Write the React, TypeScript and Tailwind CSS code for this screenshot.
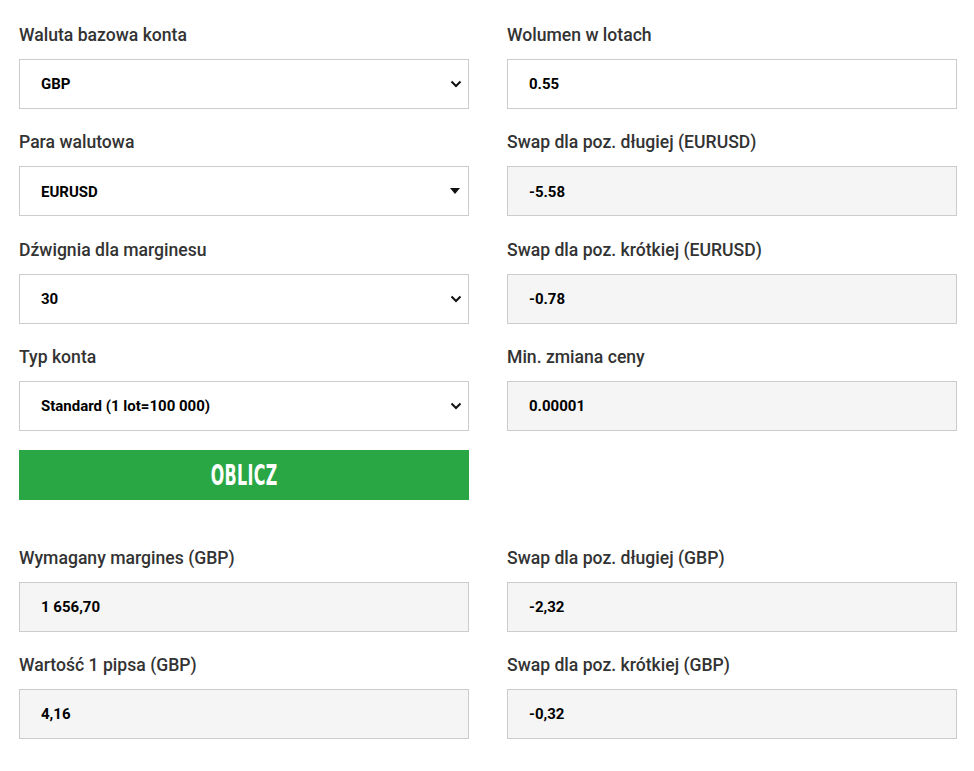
import React from 'react'

type FieldProps = {
  label: string
  value: string
  kind?: 'select' | 'dropdown' | 'input' | 'readonly'
}

const Chevron = () => (
  <svg width="12" height="8" viewBox="0 0 12 8" className="shrink-0">
    <polyline points="1.5,1.5 6,6 10.5,1.5" fill="none" stroke="#111" strokeWidth="2" />
  </svg>
)

const Caret = () => (
  <svg width="10" height="6" viewBox="0 0 10 6" className="shrink-0">
    <polygon points="0,0 10,0 5,6" fill="#111" />
  </svg>
)

const Field = ({ label, value, kind = 'input' }: FieldProps) => {
  const readonly = kind === 'readonly'
  return (
    <div className="flex flex-col">
      <label className="h-6 text-[17.6px] leading-6 font-medium text-[#333] font-['Roboto',sans-serif] whitespace-nowrap">
        {label}
      </label>
      <div
        className={`mt-3 h-[50px] border border-[#cccccc] flex items-center justify-between pl-[21px] pr-[5px] ${
          readonly ? 'bg-[#f5f5f5]' : 'bg-white'
        }`}
      >
        <span className="pt-[1px] text-[15px] font-bold text-black font-['Roboto',sans-serif]">
          {value}
        </span>
        {kind === 'select' && (
          <span className="pr-[1px]">
            <Chevron />
          </span>
        )}
        {kind === 'dropdown' && (
          <span className="pr-[3px]">
            <Caret />
          </span>
        )}
      </div>
    </div>
  )
}

export default function App() {
  return (
    <div className="w-[974px] min-h-[771px] bg-white pl-[19px] pr-[17px] pt-[23px]">
      {/* Parameters */}
      <div className="grid grid-cols-2 gap-x-[38px] gap-y-[21.34px]">
        <Field label="Waluta bazowa konta" value="GBP" kind="select" />
        <Field label="Wolumen w lotach" value="0.55" />
        <Field label="Para walutowa" value="EURUSD" kind="dropdown" />
        <Field label="Swap dla poz. długiej (EURUSD)" value="-5.58" kind="readonly" />
        <Field label="Dźwignia dla marginesu" value="30" kind="select" />
        <Field label="Swap dla poz. krótkiej (EURUSD)" value="-0.78" kind="readonly" />
        <Field label="Typ konta" value="Standard (1 lot=100 000)" kind="select" />
        <Field label="Min. zmiana ceny" value="0.00001" kind="readonly" />
      </div>

      <div className="grid grid-cols-2 gap-x-[38px] mt-[19px]">
        <button className="h-[50px] bg-[#29a745] flex items-center justify-center">
          <span className="inline-block scale-x-[0.68] scale-y-[1.08] text-[26px] leading-none font-bold text-white tracking-[0.5px] font-['DejaVu_Sans_Condensed','DejaVu_Sans',sans-serif]">
            OBLICZ
          </span>
        </button>
      </div>

      {/* Results */}
      <div className="grid grid-cols-2 gap-x-[38px] gap-y-[21px] mt-[46px]">
        <Field label="Wymagany margines (GBP)" value="1 656,70" kind="readonly" />
        <Field label="Swap dla poz. długiej (GBP)" value="-2,32" kind="readonly" />
        <Field label="Wartość 1 pipsa (GBP)" value="4,16" kind="readonly" />
        <Field label="Swap dla poz. krótkiej (GBP)" value="-0,32" kind="readonly" />
      </div>
    </div>
  )
}
